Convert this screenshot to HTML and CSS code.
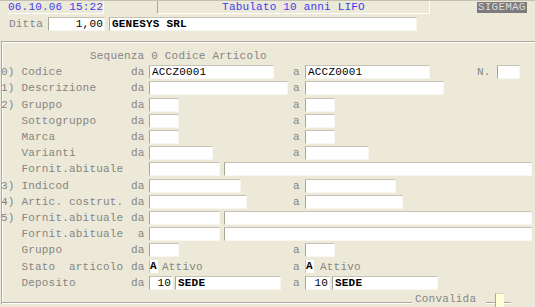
FILE: index.html
```html
<!DOCTYPE html>
<html lang="it">
<head>
    <meta charset="UTF-8">
    <title>Tabulato 10 anni LIFO</title>
    <link rel="stylesheet" href="styles.css">
</head>
<body>
    <div class="topbar">
        <div class="clock">06.10.06 15:22</div>
        <div class="title">Tabulato 10 anni LIFO</div>
        <div class="brand">SIGEMAG</div>
    </div>

    <div class="ditta">
        <span class="ditta-label">Ditta</span>
        <input class="fld num" style="width:57px" value="1,00">
        <input class="fld bold" style="width:308px" value="GENESYS SRL">
    </div>

    <div class="frame">
        <div class="seq">Sequenza 0 Codice Articolo</div>

        <div class="grid">
            <span>0) Codice</span><span>da</span>
            <span><input class="fld" style="width:125px" value="ACCZ0001"></span><span>a</span>
            <span class="cell"><input class="fld" style="width:125px" value="ACCZ0001"><span class="n-label">N.</span><input class="fld" style="width:23px"></span>

            <span>1) Descrizione</span><span>da</span>
            <span><input class="fld" style="width:139px"></span><span>a</span>
            <span><input class="fld" style="width:139px"></span>

            <span>2) Gruppo</span><span>da</span>
            <span><input class="fld" style="width:30px"></span><span>a</span>
            <span><input class="fld" style="width:30px"></span>

            <span>   Sottogruppo</span><span>da</span>
            <span><input class="fld" style="width:30px"></span><span>a</span>
            <span><input class="fld" style="width:30px"></span>

            <span>   Marca</span><span>da</span>
            <span><input class="fld" style="width:30px"></span><span>a</span>
            <span><input class="fld" style="width:30px"></span>

            <span>   Varianti</span><span>da</span>
            <span><input class="fld" style="width:64px"></span><span>a</span>
            <span><input class="fld" style="width:64px"></span>

            <span>   Fornit.abituale</span><span></span>
            <span class="wide"><input class="fld" style="width:71px"><input class="fld" style="width:308px"></span>

            <span>3) Indicod</span><span>da</span>
            <span><input class="fld" style="width:92px"></span><span>a</span>
            <span><input class="fld" style="width:91px"></span>

            <span>4) Artic. costrut.</span><span>da</span>
            <span><input class="fld" style="width:98px"></span><span>a</span>
            <span><input class="fld" style="width:98px"></span>

            <span>5) Fornit.abituale</span><span>da</span>
            <span class="wide"><input class="fld" style="width:71px"><input class="fld" style="width:308px"></span>

            <span>   Fornit.abituale</span><span> a</span>
            <span class="wide"><input class="fld" style="width:71px"><input class="fld" style="width:308px"></span>

            <span>   Gruppo</span><span>da</span>
            <span><input class="fld" style="width:30px"></span><span>a</span>
            <span><input class="fld" style="width:30px"></span>

            <span>   Stato  articolo</span><span>da</span>
            <span class="cell"><span class="flag">A</span><span class="state">Attivo</span></span><span>a</span>
            <span class="cell"><span class="flag">A</span><span class="state right">Attivo</span></span>

            <span>   Deposito</span><span>da</span>
            <span class="cell"><input class="fld num" style="width:24px" value="10"><input class="fld bold" style="width:106px" value="SEDE"></span><span>a</span>
            <span class="cell"><input class="fld num" style="width:25px" value="10"><input class="fld bold" style="width:106px" value="SEDE"></span>
        </div>

        <div class="foot">
            <div class="etch" style="width:410px"></div>
            <span class="conv">Convalida</span>
            <div class="etch" style="width:9px; margin-left:10px"></div>
            <div class="check"></div>
            <div class="etch" style="width:7px"></div>
        </div>
    </div>
</body>
</html>
```

FILE: styles.css
```css
* { box-sizing: border-box; }

body {
    margin: 0;
    width: 535px;
    height: 307px;
    overflow: hidden;
    background: #ece9d8;
    color: #858585;
    font-family: "Liberation Mono", "Courier New", monospace;
    font-size: 11px;
    letter-spacing: .2px;
}

.topbar {
    display: flex;
    height: 14px;
    border-top: 1px solid #c4c1b1;
    white-space: nowrap;
}
.clock {
    margin-left: 7px;
    width: 97px;
    padding-left: 1px;
    color: #3c3cf0;
    line-height: 12px;
    border-right: 1px solid #fff;
    border-bottom: 1px solid #fff;
}
.title {
    margin-left: 53px;
    width: 273px;
    text-align: center;
    color: #3c3cf0;
    line-height: 12px;
    border-left: 1px solid #aca899;
    border-right: 1px solid #fff;
    border-bottom: 1px solid #fff;
}
.brand {
    margin-left: 47px;
    margin-top: 1px;
    height: 11px;
    padding: 0 1px;
    line-height: 11px;
    background: #7b7b7b;
    color: #dcdcdc;
}

.ditta {
    display: flex;
    align-items: center;
    gap: 4px;
    margin-top: 3px;
    height: 14px;
}
.ditta-label { margin-left: 9px; width: 35px; }

.fld {
    height: 14px;
    margin: 0;
    padding: 0 1px 0 2px;
    border: 1px solid;
    border-color: #c6c3b4 #f7f6f0 #f7f6f0 #a9a695;
    background: #fff;
    color: #000;
    font: inherit;
    letter-spacing: inherit;
    outline: none;
}
.num { text-align: right; }
.bold { font-weight: bold; }

.frame {
    margin-top: 10px;
    margin-left: 1px;
    border-top: 1px solid #aca899;
    border-left: 1px solid #aca899;
    box-shadow: inset 1px 1px 0 #fff;
    padding-top: 6px;
}
.seq {
    height: 16.2px;
    line-height: 16.2px;
    padding-left: 88px;
}

.grid {
    margin-left: -1px;
    display: grid;
    grid-template-columns: 130px 18px 144px 12px 1fr;
    grid-auto-rows: 16.2px;
    align-items: center;
    white-space: pre;
}
.grid > span { display: flex; align-items: center; }
.wide { grid-column: 3 / 6; gap: 4px; }
.cell { gap: 2px; }
.n-label { margin-left: 45px; margin-right: 4px; }

.flag {
    width: 9px;
    height: 13px;
    background: #fff;
    color: #000;
    font-weight: bold;
    line-height: 13px;
    border-left: 1px solid #c6c3b4;
}
.state { margin-left: 2px; }
.state.right { margin-left: 4px; }

.foot {
    display: flex;
    align-items: flex-start;
    height: 13px;
}
.etch {
    align-self: flex-end;
    height: 2px;
    border-top: 1px solid #aca899;
    border-bottom: 1px solid #fff;
}
.conv {
    margin-left: 3px;
    margin-top: 2px;
    line-height: 12px;
}
.check {
    margin-top: 2px;
    width: 9px;
    height: 14px;
    background: #ffffd6;
    border-left: 1px solid #aca899;
    border-top: 1px solid #d6d3c4;
}
```
